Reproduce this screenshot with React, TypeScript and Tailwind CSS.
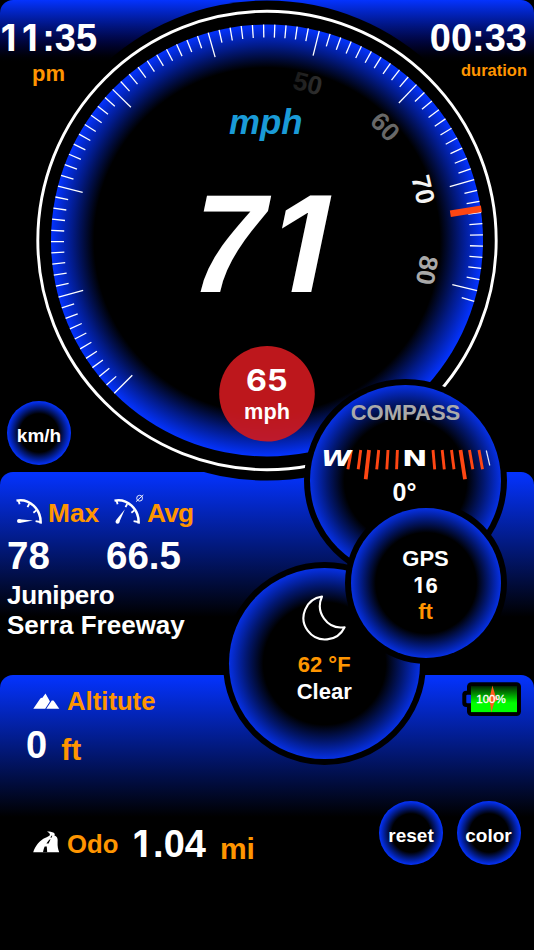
import type { ReactNode } from "react";

const FONT = '"Liberation Sans", Arial, Helvetica, sans-serif';
const CX = 267;
const CY = 240.5;

function polar(radius: number, degrees: number) {
  const a = (degrees * Math.PI) / 180;
  return { x: CX + radius * Math.sin(a), y: CY - radius * Math.cos(a) };
}

const dialTicks = Array.from({ length: 82 }, (_, i) => {
  const angle = -135 + i * 2.98;
  const major = i % 10 === 0;
  return { i, from: polar(216, angle), to: polar(major ? 190.5 : 203, angle) };
});

const dialNumbers = [
  { label: "50", x: 307.7, y: 83.3, rotate: 14.5, fill: "url(#n50)" },
  { label: "60", x: 385.3, y: 126.7, rotate: 46, fill: "#686868" },
  { label: "70", x: 423.3, y: 189.5, rotate: 77, fill: "#f4f4f4" },
  { label: "80", x: 427, y: 270.3, rotate: 100, fill: "#a9a9a9" },
];

function Dial() {
  const needleA = polar(185.3, 81.7);
  const needleB = polar(216.7, 81.6);
  return (
    <svg className="absolute left-0 top-0 z-10" width="534" height="482" viewBox="0 0 534 482" fontFamily={FONT}>
      <defs>
        <radialGradient id="dial" gradientUnits="userSpaceOnUse" cx={CX} cy={CY} r="216">
          <stop offset="0.8" stopColor="#000" />
          <stop offset="0.9" stopColor="#021a85" />
          <stop offset="1" stopColor="#0433ff" />
        </radialGradient>
        <linearGradient id="n50" x1="0" x2="1">
          <stop offset="0" stopColor="#1a1a1a" />
          <stop offset="1" stopColor="#303030" />
        </linearGradient>
      </defs>
      <circle cx={CX} cy={CY} r="240" fill="#000" />
      <circle cx={CX} cy={CY} r="229.2" fill="none" stroke="#fff" strokeWidth="2.9" />
      <circle cx={CX} cy={CY} r="216" fill="url(#dial)" />
      <g stroke="#fff" strokeWidth="1.3">
        {dialTicks.map((t) => (
          <line key={t.i} x1={t.from.x} y1={t.from.y} x2={t.to.x} y2={t.to.y} />
        ))}
      </g>
      <line x1={needleA.x} y1={needleA.y} x2={needleB.x} y2={needleB.y} stroke="#ff4613" strokeWidth="6.6" />
      {dialNumbers.map((n) => (
        <text
          key={n.label}
          transform={`translate(${n.x} ${n.y}) rotate(${n.rotate})`}
          y="9"
          textAnchor="middle"
          fontSize="26"
          fontWeight="bold"
          fill={n.fill}
        >
          {n.label}
        </text>
      ))}
      <text x="229" y="133.7" fontSize="34.8" fontWeight="bold" fontStyle="italic" fill="#1a9bd7">
        mph
      </text>
      <g transform="translate(0 292.3) skewX(-11.8)" fontWeight="bold" fill="#fff">
        <text fontSize="140">
          <tspan x="181" textLength="76" lengthAdjust="spacingAndGlyphs">7</tspan>
          <tspan x="320" textAnchor="end" fontSize="132.5" fontFamily="Inter, sans-serif">1</tspan>
        </text>
      </g>
      <circle cx="267" cy="393.8" r="47.8" fill="#d1191f" fillOpacity="0.9" />
      <text x="246" y="390.5" fontSize="29.3" fontWeight="bold" fontFamily="Inter, sans-serif" textLength="41.5" lengthAdjust="spacingAndGlyphs" fill="#fff">
        65
      </text>
      <text x="267" y="419.2" fontSize="21.7" fontWeight="bold" textAnchor="middle" fill="#fff">
        mph
      </text>
    </svg>
  );
}

/* Footless numeral one, set on the same advance as the other digits. */
function One() {
  return (
    <span className="relative -left-[0.05em] inline-block w-[0.582em] text-center font-[Inter] text-[0.955em] leading-none">
      1
    </span>
  );
}

function Ring({ className, children }: { className: string; children: ReactNode }) {
  return (
    <div
      className={`absolute flex flex-col items-center rounded-full border-[6px] border-black bg-black bg-clip-border text-[22px] leading-[26.5px] ${className}`}
    >
      {children}
    </div>
  );
}

function RoundButton({ label }: { label: string }) {
  return (
    <button className="flex size-16 shrink-0 items-center justify-center rounded-full bg-[radial-gradient(circle_closest-side,#000_0%,#000_60%,#021a80_80%,#0433ff_100%)] pt-[5px] text-[19px] font-bold leading-none text-white">
      {label}
    </button>
  );
}

function SpeedIcon({ average = false }: { average?: boolean }) {
  return (
    <svg width="32" height="32" viewBox="0 0 32 32" fill="none" stroke="#fff">
      <path d="M1.5 6.6 C14 4 26.5 15 25.6 29.7" strokeWidth="2.5" />
      <path d="M3.4 6 L4.6 10.3 M14.2 10 L12.5 13.2 M21.3 16.4 L18.4 18.7 M25.3 28 L20.6 27.2" strokeWidth="1.8" />
      {average ? (
        <>
          <path d="M3 26.3 L11.9 15.3 L6 28.7 Z" fill="#fff" stroke="none" />
          <circle cx="4.5" cy="27.7" r="2" fill="#fff" stroke="none" />
          <circle cx="26.6" cy="4.2" r="2.9" strokeWidth="0.9" />
          <path d="M23 7.7 L30.3 0.9" strokeWidth="0.9" />
        </>
      ) : (
        <>
          <path d="M4.5 25.3 L18 26.6 L4.5 29 Z" fill="#fff" stroke="none" />
          <circle cx="4" cy="27.1" r="2" fill="#fff" stroke="none" />
        </>
      )}
    </svg>
  );
}

function MountainIcon() {
  return (
    <svg width="27" height="17" viewBox="0 0 27 17" fill="#fff">
      <path d="M0.3 15.7 L7.3 5.5 L8.6 4.7 L9.2 5 L12.5 0.6 L16.3 7.2 L16.9 8.6 L12.2 15.7 Z" />
      <path d="M13.3 15.7 L18.8 7.5 L20.4 7.4 L22 9.6 L26.3 15.7 Z" />
    </svg>
  );
}

function RoadIcon() {
  return (
    <svg className="relative -top-[4px]" width="27" height="22" viewBox="0 0 27 22" fill="#fff">
      <path d="M0.2 21.3 C2.5 14.5 6.5 9.5 12.5 6.8 C17.5 4.6 18.6 3.2 14 0.4 C19.5 0.4 23 2 21.4 4.4 C25 5.6 24.8 8.5 24.6 11.5 C24.4 15 25 18 26.2 21.3 Z" />
      <path d="M10 21.3 C10.4 18.8 10.9 17.2 11.7 15.4 L13.8 15.4 L14.2 21.3 Z M13.4 12.4 L16.2 8.8 L17.6 8.2 L15.6 12.6 Z M17.3 6.4 L18.7 4.4 L19.3 4.8 L18.5 6.8 Z" fill="#000" />
    </svg>
  );
}

function MoonIcon() {
  return (
    <svg width="48" height="48" viewBox="0 0 48 48" fill="none" stroke="#fff" strokeWidth="2.1" strokeLinejoin="round">
      <path d="M22 2.5 C15 18 27 36 44.6 33.2 A21.6 21.6 0 1 1 22 2.5 Z" />
    </svg>
  );
}

function Battery() {
  return (
    <svg width="60" height="35" viewBox="0 0 60 35">
      <defs>
        <linearGradient id="charge" x1="0" y1="0" x2="0" y2="1">
          <stop offset="0" stopColor="#002800" />
          <stop offset="0.65" stopColor="#00ff00" />
          <stop offset="1" stopColor="#00ff00" />
        </linearGradient>
      </defs>
      <rect x="0.3" y="8.8" width="12" height="16.2" rx="4" fill="#000" />
      <rect x="5" y="0.2" width="54" height="33.8" rx="4.5" fill="#000" />
      <rect x="4.3" y="12.8" width="5" height="8.4" rx="1" fill="#0430e8" />
      <rect x="9" y="4.1" width="46" height="26" fill="url(#charge)" />
      <path d="M30.4 3.6 L33.4 13.5 L36.4 17.5 L32.4 20 L29.3 30.4 L28 20.5 L24.3 17.4 L28 14.2 Z" fill="#ff5a1a" />
      <text x="29" y="21.2" textAnchor="middle" fontFamily={FONT} fontSize="11.5" fontWeight="normal" stroke="#fff" strokeWidth="0.3" fill="#fff">
        100%
      </text>
    </svg>
  );
}

const compassTicks = [
  { a: 61.4, b: 57.9 },
  { a: 70.7, b: 68.2 },
  { a: 79, b: 75.7, major: true },
  { a: 88.7, b: 86.7 },
  { a: 98, b: 96.8 },
  { a: 107.4, b: 106.6 },
  { a: 143, b: 144.7 },
  { a: 152.2, b: 154.3 },
  { a: 161.5, b: 164 },
  { a: 170.5, b: 175, major: true },
  { a: 179.5, b: 182.8 },
  { a: 189, b: 192.5 },
];

function CompassTape() {
  return (
    <svg className="absolute left-0 top-[53px]" width="190" height="44" viewBox="20 438 190 44">
      {compassTicks.map((t) => (
        <line
          key={t.a}
          x1={t.a}
          y1="450"
          x2={t.b}
          y2={t.major ? 479.3 : 469.3}
          stroke="#ff4613"
          strokeWidth={t.major ? 3.8 : 2.9}
        />
      ))}
      <line x1="196.3" y1="450.5" x2="199.8" y2="465.5" stroke="#dfe3f5" strokeWidth="1.2" />
      <g fontFamily='"DejaVu Sans", sans-serif' fontWeight="bold" fill="#fff">
        <text x="31" y="466.2" fontSize="21.5" fontStyle="italic" textLength="30.5" lengthAdjust="spacingAndGlyphs">
          W
        </text>
        <text x="112" y="465.5" fontSize="20.5" textLength="25.5" lengthAdjust="spacingAndGlyphs">
          N
        </text>
      </g>
    </svg>
  );
}

export default function App() {
  return (
    <main
      className="relative flex h-[950px] w-[534px] flex-col overflow-hidden bg-black font-bold text-white"
      style={{ fontFamily: FONT }}
    >
      <header className="relative h-[472px] shrink-0">
        <div className="flex h-[65px] justify-between rounded-t-[13px] bg-linear-to-b from-[#0433ff] to-black px-[7px] pt-[19px] text-[38px] leading-none">
          <div className="-ml-[7px] flex w-[97px] flex-col items-center">
            <span className="whitespace-nowrap">
              <One />
              <One />
              :35
            </span>
            <span className="pt-[6px] text-[22px] leading-none text-[#ff9500]">pm</span>
          </div>
          <div className="flex flex-col items-end">
            <span>00:33</span>
            <span className="pt-[5px] text-[16.5px] leading-none text-[#ff9500]">duration</span>
          </div>
        </div>
        <div className="absolute left-[7px] top-[401px]">
          <RoundButton label="km/h" />
        </div>
      </header>

      <section className="flex h-[203px] shrink-0 flex-col bg-black">
        <div className="flex h-full flex-col rounded-t-[13px] bg-[linear-gradient(#0433ff_0px,#000_145px)] pl-[7px]">
          <div className="flex h-[54px] items-end text-[26.3px] leading-none text-[#ff9500]">
            <div className="flex w-[98px] items-end pl-[8px]">
              <SpeedIcon />
              <span className="pl-[1px]">Max</span>
            </div>
            <div className="flex items-end pl-[8px]">
              <SpeedIcon average />
              <span className="pl-[2px] tracking-[-0.8px]">Avg</span>
            </div>
          </div>
          <div className="flex pt-[11px] text-[38.5px] leading-none">
            <span className="w-[99px]">78</span>
            <span>66.5</span>
          </div>
          <p className="w-[200px] pt-[4px] text-[26px] leading-[30px]">
            <span className="tracking-[-0.3px]">Junipero</span>
            <br />
            Serra Freeway
          </p>
        </div>
      </section>

      <section className="relative h-[275px] shrink-0 rounded-t-[13px] bg-[linear-gradient(#0433ff_0px,#000_142px)] pt-[14px]">
        <div className="flex items-center pl-[33px] text-[25.7px] leading-none text-[#ff9500]">
          <MountainIcon />
          <span className="pl-[7px]">Altitute</span>
        </div>
        <div className="flex items-baseline gap-[14px] pl-[26px] pt-[11px] text-[38px] leading-none">
          <span>0</span>
          <span className="relative top-[2px] text-[30px] leading-none text-[#ff9500]">ft</span>
        </div>
        <div className="absolute left-[462px] top-[7px]">
          <Battery />
        </div>
        <div className="mt-[37px] flex h-16 justify-between pl-[33px] pr-[13.5px]">
          <div className="flex items-baseline pt-[24px] text-[38px] leading-none">
            <RoadIcon />
            <span className="relative -top-[4px] w-[72px] pl-[7px] text-[25.7px] leading-none text-[#ff9500]">Odo</span>
            <span>
              <One />
              .04
            </span>
            <span className="relative top-[2px] pl-[14px] text-[30px] leading-none text-[#ff9500]">mi</span>
          </div>
          <div className="flex gap-[13.5px]">
            <RoundButton label="reset" />
            <RoundButton label="color" />
          </div>
        </div>
      </section>

      <Dial />

      <Ring className="left-[304px] top-[379px] z-20 size-[203px]">
        <div className="absolute inset-0 rounded-full bg-[radial-gradient(circle_closest-side,#000_64%,#02176f_82%,#0630e4_100%)]" />
        <span className="relative pt-[14.5px] text-[#aaaaaa]">COMPASS</span>
        <CompassTape />
        <span className="relative -left-[1px] pt-[53px] text-[25px]">0°</span>
      </Ring>
      <Ring className="left-[222.7px] top-[562.2px] z-20 size-[203px]">
        <div className="absolute inset-0 rounded-full bg-[radial-gradient(circle_closest-side,#000_64%,#02176f_82%,#0630e4_100%)]" />
        <div className="relative flex flex-col items-center pt-[26px]">
          <MoonIcon />
          <span className="pt-[10px] text-[#ff9500]">62 °F</span>
          <span>Clear</span>
        </div>
      </Ring>
      <Ring className="left-[344.5px] top-[501.5px] z-30 size-[162px]">
        <div className="absolute inset-0 rounded-full bg-[radial-gradient(circle_closest-side,#000_67%,#02176f_83%,#0630e4_100%)]" />
        <div className="relative flex flex-col items-center pt-[38.5px]">
          <span>GPS</span>
          <span>
            <One />6
          </span>
          <span className="text-[#ff9500]">ft</span>
        </div>
      </Ring>
    </main>
  );
}
